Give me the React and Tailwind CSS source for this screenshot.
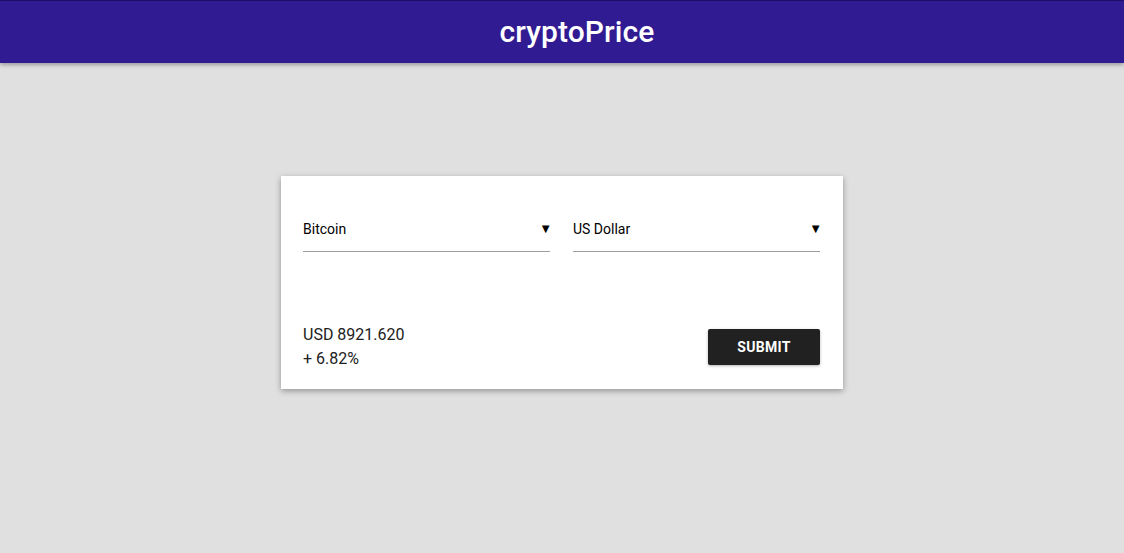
import React, { useState } from 'react';

const Select = ({ value, options, onChange }) => (
  <div className="relative flex-1 h-[41px] border-b border-[#9e9e9e] flex items-center pb-[3px]">
    <select
      value={value}
      onChange={(e) => onChange(e.target.value)}
      className="appearance-none w-full bg-transparent text-[14px] text-black outline-none cursor-pointer"
    >
      {options.map((o) => (
        <option key={o}>{o}</option>
      ))}
    </select>
    <span className="pointer-events-none absolute right-[-2px] top-[11px] text-[13px] leading-none text-black">▼</span>
  </div>
);

const App = () => {
  const [coin, setCoin] = useState('Bitcoin');
  const [currency, setCurrency] = useState('US Dollar');

  return (
    <div className="min-h-screen w-full bg-[#e0e0e0] font-['Roboto','Liberation_Sans',sans-serif]">
      <header className="h-[63px] bg-[#311b92] border-t border-[#1e0f66] shadow-[0_2px_4px_rgba(0,0,0,0.3)] flex items-center justify-center">
        <h1 className="ml-[30px] text-white text-[30px] font-medium leading-none tracking-[0.1px]">cryptoPrice</h1>
      </header>

      <main className="flex justify-center pt-[113px]">
        <div className="w-[562px] bg-white shadow-[0_2px_6px_rgba(0,0,0,0.35)] pl-[22px] pr-[23px] pt-[35px] pb-[18px]">
          <div className="flex gap-[23px]">
            <Select value={coin} options={['Bitcoin', 'Ethereum', 'Litecoin']} onChange={setCoin} />
            <Select value={currency} options={['US Dollar', 'Euro', 'British Pound']} onChange={setCurrency} />
          </div>

          <div className="mt-[71px] flex items-center justify-between">
            <div className="text-[16px] leading-[24px] text-[#212121]">
              <div>USD 8921.620</div>
              <div>+ 6.82%</div>
            </div>
            <button className="w-[112px] h-[36px] bg-[#212121] text-white text-[14px] font-bold tracking-[0.3px] rounded-[2px] shadow-[0_1px_3px_rgba(0,0,0,0.3)]">
              SUBMIT
            </button>
          </div>
        </div>
      </main>
    </div>
  );
};

export default App;
